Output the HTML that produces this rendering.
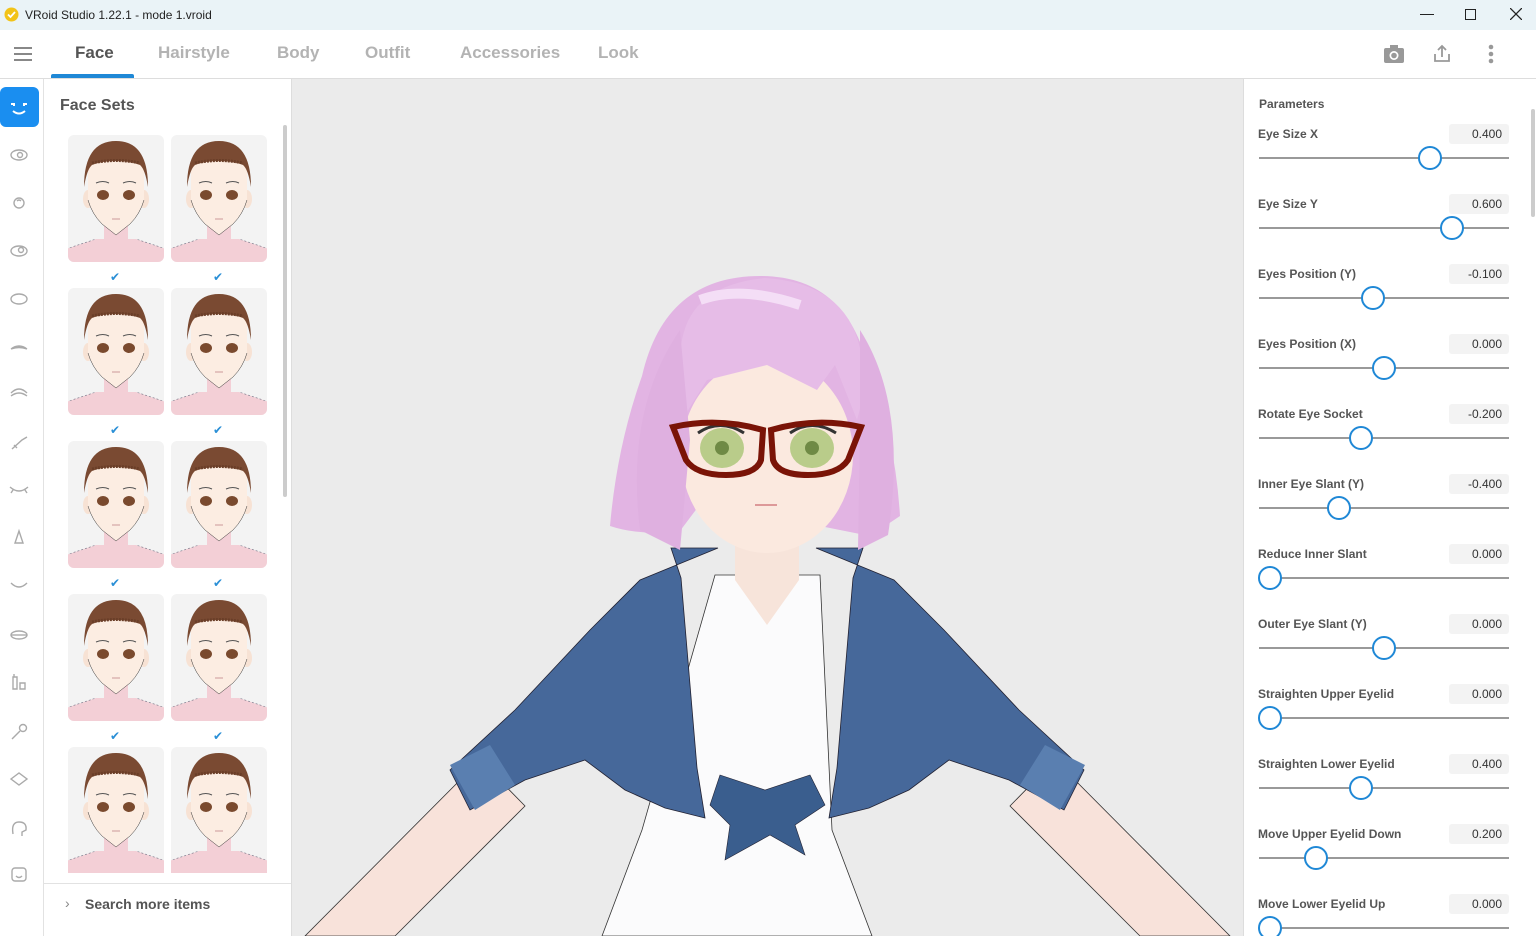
<!DOCTYPE html>
<html><head><meta charset="utf-8"><style>
*{box-sizing:border-box;margin:0;padding:0}
body{width:1536px;height:936px;overflow:hidden;font-family:"Liberation Sans","DejaVu Sans",sans-serif;background:#fff;position:relative;color:#555}
.abs{position:absolute}
#title{left:0;top:0;width:1536px;height:30px;background:#eaf3f7;font-size:12px;color:#222}
#tabs{left:0;top:30px;width:1536px;height:49px;background:#fff;border-bottom:1px solid #ddd}
.tab{position:absolute;top:13px;font-size:17px;font-weight:bold;color:#b3b3b3}
#side{left:0;top:79px;width:44px;height:857px;background:#fff;border-right:1px solid #e2e2e2}
#list{left:44px;top:79px;width:248px;height:857px;background:#fff;border-right:1px solid #ddd}
.card{position:absolute;width:96px;height:127px;background:#f3f3f3;border-radius:6px;overflow:hidden}
.chk{position:absolute;color:#2a8fd6;font-size:12px}
#view{left:292px;top:79px;width:951px;height:857px;background:#ebebeb;overflow:hidden}
#right{left:1243px;top:79px;width:293px;height:857px;background:#fff;border-left:1px solid #ddd}
.lbl{position:absolute;left:15px;font-size:12px;font-weight:bold;color:#555;white-space:nowrap}
.val{position:absolute;left:206px;width:60px;height:20px;background:#f3f3f3;border-radius:3px;font-size:12px;text-align:right;padding:3px 7px 0 0;color:#333}
.trk{position:absolute;left:16px;width:250px;height:2px;background:#999}
.knob{position:absolute;width:24px;height:24px;border:2px solid #1f88d6;border-radius:50%;background:#fff}
</style></head><body>
<div id="title" class="abs">
<svg class="abs" style="left:4px;top:7px" width="15" height="15"><circle cx="7.5" cy="7.5" r="7" fill="#f2c318"/><path d="M4 7.5l2.5 2.5 4.5-5" stroke="#fff" stroke-width="1.8" fill="none"/></svg>
<span class="abs" style="left:25px;top:8px">VRoid Studio 1.22.1 - mode 1.vroid</span>
<div class="abs" style="left:1420px;top:14px;width:14px;height:1px;background:#222"></div>
<div class="abs" style="left:1465px;top:9px;width:11px;height:11px;border:1.3px solid #222"></div>
<svg class="abs" style="left:1510px;top:8px" width="12" height="12"><path d="M0 0l12 12M12 0L0 12" stroke="#222" stroke-width="1.3"/></svg>
</div>
<div id="tabs" class="abs">
<svg class="abs" style="left:14px;top:17px" width="18" height="14"><path d="M0 1h18M0 7h18M0 13h18" stroke="#888" stroke-width="2"/></svg>
<span class="tab" style="left:75px;color:#555">Face</span>
<div class="abs" style="left:51px;top:44px;width:83px;height:4px;background:#1f88d6;border-radius:2px 2px 0 0"></div>
<span class="tab" style="left:158px">Hairstyle</span>
<span class="tab" style="left:277px">Body</span>
<span class="tab" style="left:365px">Outfit</span>
<span class="tab" style="left:460px">Accessories</span>
<span class="tab" style="left:598px">Look</span>
<svg class="abs" style="left:1384px;top:15px" width="20" height="18"><rect x="0" y="3" width="20" height="15" rx="2" fill="#999"/><rect x="6" y="0" width="8" height="4" fill="#999"/><circle cx="10" cy="10.5" r="4.5" fill="#fff"/><circle cx="10" cy="10.5" r="2.8" fill="#999"/></svg>
<svg class="abs" style="left:1433px;top:14px" width="18" height="19"><path d="M9 13V2M5 6l4-4 4 4M2 10v7h14v-7" stroke="#999" stroke-width="1.8" fill="none"/></svg>
<svg class="abs" style="left:1487px;top:14px" width="8" height="20"><circle cx="4" cy="3" r="2.3" fill="#999"/><circle cx="4" cy="10" r="2.3" fill="#999"/><circle cx="4" cy="17" r="2.3" fill="#999"/></svg>
</div>
<div id="side" class="abs">
<div class="abs" style="left:0;top:8px;width:39px;height:40px;background:#1a8ef0;border-radius:6px"></div>
<svg class="abs" style="left:0;top:0" width="44" height="857" fill="none" stroke="#aaa" stroke-width="1.4">
<path d="M13 32q6 5 12 0M14 24v3M24 24v3M11 25h2M25 25h2" stroke="#fff" stroke-width="2"/>
<ellipse cx="19" cy="76" rx="8" ry="5"/><circle cx="20" cy="76" r="2.5"/>
<circle cx="19" cy="124" r="5"/><path d="M17 122q2-2 4 0"/>
<ellipse cx="19" cy="172" rx="8" ry="5"/><circle cx="21" cy="171" r="2.5"/>
<ellipse cx="19" cy="220" rx="8" ry="5"/>
<path d="M11 270q8-6 16 0M11 270q8-3 16 0"/>
<path d="M11 314q8-8 16 0M11 317q8-6 16 0"/>
<path d="M12 370l10-9 5-3M14 366l3 3"/>
<path d="M10 408q9 8 18 0M13 411l-2 3M25 411l2 3"/>
<path d="M19 452l-4 12h8z"/>
<path d="M11 504q8 8 16 0"/>
<ellipse cx="19" cy="556" rx="8" ry="4"/><path d="M11 556h16"/>
<path d="M13 598h4v12h-4zM20 604h5v6h-5zM14 598v-3"/>
<circle cx="23" cy="649" r="3.5"/><path d="M20 652l-8 8"/>
<path d="M11 700l8-6 8 6-8 6z"/>
<path d="M13 755q-2-12 6-12q8 0 7 8l-4 2v4"/>
<rect x="12" y="789" width="14" height="13" rx="3"/><path d="M16 797q3 3 6 0"/>
</svg>
</div>
<svg width="0" height="0" style="position:absolute"><symbol id="fc" viewBox="0 0 96 127">
<path d="M-2 114l30-10h40l30 10v15H-2z" fill="#f3cfd6"/>
<path d="M-2 114l30-10M98 114l-30-10" stroke="#778" stroke-dasharray="2 2" stroke-width=".6"/>
<rect x="36" y="88" width="24" height="28" fill="#f3cfd6"/>
<ellipse cx="20" cy="64" rx="5" ry="9" fill="#f7e2d4"/><ellipse cx="76" cy="64" rx="5" ry="9" fill="#f7e2d4"/>
<path d="M20 40q0-30 28-30t28 30v25q-4 14-14 24l-14 11-14-11q-10-10-14-24z" fill="#fcede2"/>
<path d="M16 52q0-46 32-46t32 46q-3-18-8-22-10-4-24-4t-24 4q-5 4-8 22z" fill="#7a4a32"/>
<path d="M24 28q24-5 48 0" stroke="#6a3e28" stroke-width="3" fill="none" stroke-dasharray="2 1"/>
<path d="M28 48q7-3 13 0M55 48q7-3 13 0" stroke="#555" stroke-width="1" fill="none"/>
<ellipse cx="35" cy="60" rx="6" ry="5" fill="#7a4a2e"/><ellipse cx="61" cy="60" rx="6" ry="5" fill="#7a4a2e"/>
<path d="M20 65q4 14 14 24l14 11 14-11q10-10 14-24" stroke="#333" stroke-width=".5" fill="none"/>
<path d="M44 84h8" stroke="#c99" stroke-width="1"/>
</symbol></svg>
<div id="list" class="abs">
<span class="abs" style="left:16px;top:18px;font-size:16px;font-weight:bold;color:#555">Face Sets</span>
<div class="abs" style="left:239px;top:46px;width:4px;height:372px;background:#ccc;border-radius:2px"></div>
<div class="card" style="left:24px;top:56px"><svg width="96" height="127"><use href="#fc"/></svg></div>
<div class="card" style="left:127px;top:56px"><svg width="96" height="127"><use href="#fc"/></svg></div>
<span class="chk" style="left:66px;top:191px">✔</span><span class="chk" style="left:169px;top:191px">✔</span>
<div class="card" style="left:24px;top:209px"><svg width="96" height="127"><use href="#fc"/></svg></div>
<div class="card" style="left:127px;top:209px"><svg width="96" height="127"><use href="#fc"/></svg></div>
<span class="chk" style="left:66px;top:344px">✔</span><span class="chk" style="left:169px;top:344px">✔</span>
<div class="card" style="left:24px;top:362px"><svg width="96" height="127"><use href="#fc"/></svg></div>
<div class="card" style="left:127px;top:362px"><svg width="96" height="127"><use href="#fc"/></svg></div>
<span class="chk" style="left:66px;top:497px">✔</span><span class="chk" style="left:169px;top:497px">✔</span>
<div class="card" style="left:24px;top:515px"><svg width="96" height="127"><use href="#fc"/></svg></div>
<div class="card" style="left:127px;top:515px"><svg width="96" height="127"><use href="#fc"/></svg></div>
<span class="chk" style="left:66px;top:650px">✔</span><span class="chk" style="left:169px;top:650px">✔</span>
<div class="card" style="left:24px;top:668px;height:126px;border-radius:6px 6px 0 0"><svg width="96" height="127"><use href="#fc"/></svg></div>
<div class="card" style="left:127px;top:668px;height:126px;border-radius:6px 6px 0 0"><svg width="96" height="127"><use href="#fc"/></svg></div>
<div class="abs" style="left:0;top:804px;width:247px;height:53px;background:#fff;border-top:1px solid #e2e2e2"></div>
<span class="abs" style="left:21px;top:816px;font-size:14px;color:#888">›</span>
<span class="abs" style="left:41px;top:817px;font-size:14px;font-weight:bold;color:#555">Search more items</span>
</div>
<div id="view" class="abs">
<svg width="951" height="857" viewBox="292 79 951 857">
<path d="M480 760L305 936h90l130-130z" fill="#f8e2da" stroke="#333" stroke-width=".8"/>
<path d="M1055 760l175 176h-90l-130-130z" fill="#f8e2da" stroke="#333" stroke-width=".8"/>
<path d="M715 575h105l12 255 40 106H602l40-106z" fill="#fbfbfc" stroke="#333" stroke-width=".8"/>
<path d="M735 520h64v60l-32 45-32-45z" fill="#f7e4da"/>
<path d="M718 548l-78 32-50 50-75 80-65 60 20 40 55-30 60-20 40 30 40 18 40 10-8-50-16-190-10-30z" fill="#46689a" stroke="#223" stroke-width=".8"/>
<path d="M816 548l78 32 50 50 75 80 65 60-20 40-55-30-60-20-40 30-40 18-40 10 8-50 16-190 10-30z" fill="#46689a" stroke="#223" stroke-width=".8"/>
<path d="M450 765l25 45 40-25-25-40zM1085 765l-25 45-40-25 25-40z" fill="#5a7fb0"/>
<path d="M720 775l45 15 45-15 15 30-30 20 10 30-35-20-45 25 5-35-20-20z" fill="#3a5e8e" stroke="#223" stroke-width=".6"/>
<path d="M760 276q-95 0-118 100-25 70-32 150 30 10 70 5l30-40h70l40 35 50 10 30-20q-5-80-30-140-20-100-110-100z" fill="#e2b4e3"/>
<ellipse cx="767" cy="455" rx="86" ry="98" fill="#fbe9df"/>
<path d="M682 340q10-55 83-62 80 5 95 70 8 35-3 72l-22-55-18 25-50-25-60 15-22 35q-10-40-3-75z" fill="#e6bce7"/>
<path d="M640 530q-15-120 40-200l10 110-10 110zM888 535q20-130-28-205l0 100 -2 120z" fill="#dfb0e0"/>
<path d="M700 300q40-15 100 5" stroke="#f4def6" stroke-width="10" fill="none"/>
<ellipse cx="722" cy="448" rx="22" ry="20" fill="#b9cc8a"/><ellipse cx="812" cy="448" rx="22" ry="20" fill="#b9cc8a"/>
<circle cx="722" cy="448" r="7" fill="#6f8a45"/><circle cx="812" cy="448" r="7" fill="#6f8a45"/>
<path d="M698 433q22-15 46 0M790 433q22-15 46 0" stroke="#333" stroke-width="3" fill="none"/>
<path d="M673 427q45-10 90 3l-2 30q-5 15-35 15t-40-15zM861 427q-45-10-90 3l2 30q5 15 35 15t40-15z" fill="none" stroke="#7a1407" stroke-width="6"/>
<path d="M755 505h22" stroke="#d99" stroke-width="2"/>
</svg>
</div>
<div id="right" class="abs">
<span class="abs" style="left:15px;top:18px;font-size:12px;font-weight:bold;color:#555">Parameters</span>
<div class="abs" style="left:287px;top:30px;width:4px;height:108px;background:#ccc;border-radius:2px"></div>
</div>
<div class="abs" style="left:1243px;top:79px;width:293px;height:857px;overflow:hidden">
<span class="lbl" style="top:48px">Eye Size X</span><div class="val" style="top:45px">0.400</div><div class="trk" style="top:78px"></div><div class="knob" style="left:175px;top:67px"></div>
<span class="lbl" style="top:118px">Eye Size Y</span><div class="val" style="top:115px">0.600</div><div class="trk" style="top:148px"></div><div class="knob" style="left:197px;top:137px"></div>
<span class="lbl" style="top:188px">Eyes Position (Y)</span><div class="val" style="top:185px">-0.100</div><div class="trk" style="top:218px"></div><div class="knob" style="left:118px;top:207px"></div>
<span class="lbl" style="top:258px">Eyes Position (X)</span><div class="val" style="top:255px">0.000</div><div class="trk" style="top:288px"></div><div class="knob" style="left:129px;top:277px"></div>
<span class="lbl" style="top:328px">Rotate Eye Socket</span><div class="val" style="top:325px">-0.200</div><div class="trk" style="top:358px"></div><div class="knob" style="left:106px;top:347px"></div>
<span class="lbl" style="top:398px">Inner Eye Slant (Y)</span><div class="val" style="top:395px">-0.400</div><div class="trk" style="top:428px"></div><div class="knob" style="left:84px;top:417px"></div>
<span class="lbl" style="top:468px">Reduce Inner Slant</span><div class="val" style="top:465px">0.000</div><div class="trk" style="top:498px"></div><div class="knob" style="left:15px;top:487px"></div>
<span class="lbl" style="top:538px">Outer Eye Slant (Y)</span><div class="val" style="top:535px">0.000</div><div class="trk" style="top:568px"></div><div class="knob" style="left:129px;top:557px"></div>
<span class="lbl" style="top:608px">Straighten Upper Eyelid</span><div class="val" style="top:605px">0.000</div><div class="trk" style="top:638px"></div><div class="knob" style="left:15px;top:627px"></div>
<span class="lbl" style="top:678px">Straighten Lower Eyelid</span><div class="val" style="top:675px">0.400</div><div class="trk" style="top:708px"></div><div class="knob" style="left:106px;top:697px"></div>
<span class="lbl" style="top:748px">Move Upper Eyelid Down</span><div class="val" style="top:745px">0.200</div><div class="trk" style="top:778px"></div><div class="knob" style="left:61px;top:767px"></div>
<span class="lbl" style="top:818px">Move Lower Eyelid Up</span><div class="val" style="top:815px">0.000</div><div class="trk" style="top:848px"></div><div class="knob" style="left:15px;top:837px"></div>
</div>
</body></html>
